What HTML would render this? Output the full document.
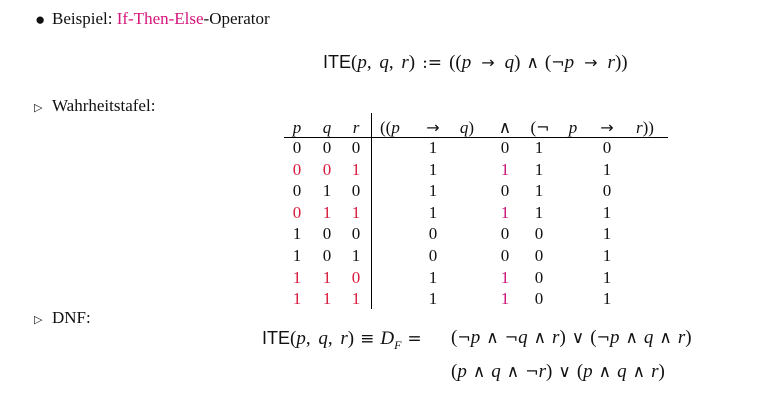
<!DOCTYPE html>
<html><head><meta charset="utf-8"><style>
html,body{margin:0;padding:0;background:#fff;width:764px;height:408px;overflow:hidden}
body{position:relative;font-family:"Liberation Serif","DejaVu Serif",serif;font-size:17px;color:#111}
.a{position:absolute;white-space:nowrap;line-height:20px}
.c{transform:translateX(-50%)}
i{font-style:italic}
.s{font-family:"Liberation Sans","DejaVu Sans",sans-serif;font-size:18px}
.m{color:#d4157a}
.r{color:#d81a3c}
.k{color:#c8137a}
.o{font-family:"DejaVu Serif",serif;font-size:17px;margin:0 6px}
.ar{font-family:"DejaVu Sans",sans-serif;font-size:16px;margin:0 10px}
.n{font-family:"DejaVu Serif",serif;font-size:16px}
.f{margin-right:3px}
</style></head><body>
<div class="a" style="left:35px;top:10px">●</div>
<div class="a" style="left:52px;top:9px">Beispiel: <span class="m">If-Then-Else</span>-Operator</div>
<div class="a" style="left:323px;top:52px;font-size:19px"><span class="s">ITE</span>(<i>p</i>,<span class="f"> </span><i>q</i>,<span class="f"> </span><i>r</i>)<span class="o" style="margin:0 7px">:=</span>((<i>p</i><span class="ar">→</span><i>q</i>)<span class="o">∧</span>(<span class="n">¬</span><i>p</i><span class="ar">→</span><i>r</i>))</div>
<div class="a" style="left:34px;top:98px;font-size:11px">▷</div>
<div class="a" style="left:52px;top:96px">Wahrheitstafel:</div>

<div class="a" style="left:371px;top:113px;width:1px;height:196px;background:#000"></div>
<div class="a" style="left:284px;top:137px;width:384px;height:1px;background:#000"></div>

<div class="a c" style="left:297px;top:118px"><i>p</i></div>
<div class="a c" style="left:327px;top:118px"><i>q</i></div>
<div class="a c" style="left:356px;top:118px"><i>r</i></div>
<div class="a" style="left:380px;top:118px">((<i>p</i></div>
<div class="a c" style="left:433px;top:118px;font-family:'DejaVu Sans';font-size:16px">→</div>
<div class="a c" style="left:467px;top:118px"><i>q</i>)</div>
<div class="a c" style="left:505px;top:118px;font-family:'DejaVu Serif';font-size:17px">∧</div>
<div class="a c" style="left:540px;top:118px">(<span class="n">¬</span></div>
<div class="a c" style="left:573px;top:118px"><i>p</i></div>
<div class="a c" style="left:607px;top:118px;font-family:'DejaVu Sans';font-size:16px">→</div>
<div class="a c" style="left:645px;top:118px"><i>r</i>))</div>

<div id="rows"></div>
<script>
var d=[["000","1","0","1","0",""],["001","1","1","1","1","rrr"],["010","1","0","1","0",""],["011","1","1","1","1","rrr"],["100","0","0","0","1",""],["101","0","0","0","1",""],["110","1","1","0","1","rrr"],["111","1","1","0","1","rrr"]];
var h="";
d.forEach(function(r,i){var y=138+i*21.6;var xs=[297,327,356];
for(var j=0;j<3;j++){h+='<div class="a c'+(r[5]?' r':'')+'" style="left:'+xs[j]+'px;top:'+y+'px">'+r[0][j]+'</div>';}
h+='<div class="a c" style="left:433px;top:'+y+'px">'+r[1]+'</div>';
h+='<div class="a c'+(r[2]=="1"?' k':'')+'" style="left:505px;top:'+y+'px">'+r[2]+'</div>';
h+='<div class="a c" style="left:539px;top:'+y+'px">'+r[3]+'</div>';
h+='<div class="a c" style="left:607px;top:'+y+'px">'+r[4]+'</div>';});
document.getElementById('rows').innerHTML=h;
</script>

<div class="a" style="left:34px;top:310px;font-size:11px">▷</div>
<div class="a" style="left:52px;top:308px">DNF:</div>
<div class="a" style="left:262px;top:328px;font-size:19px"><span class="s">ITE</span>(<i>p</i>,<span class="f"> </span><i>q</i>,<span class="f"> </span><i>r</i>)<span class="o" style="margin:0 6px">≡</span><i>D<sub style="font-size:12px">F</sub></i><span class="o" style="margin:0 6px">=</span></div>
<div class="a" style="left:451px;top:328px;font-size:19px">(<span class="n">¬</span><i>p</i><span class="o">∧</span><span class="n">¬</span><i>q</i><span class="o">∧</span><i>r</i>)<span class="o">∨</span>(<span class="n">¬</span><i>p</i><span class="o">∧</span><i>q</i><span class="o">∧</span><i>r</i>)</div>
<div class="a" style="left:451px;top:362px;font-size:19px">(<i>p</i><span class="o">∧</span><i>q</i><span class="o">∧</span><span class="n">¬</span><i>r</i>)<span class="o">∨</span>(<i>p</i><span class="o">∧</span><i>q</i><span class="o">∧</span><i>r</i>)</div>
</body></html>
